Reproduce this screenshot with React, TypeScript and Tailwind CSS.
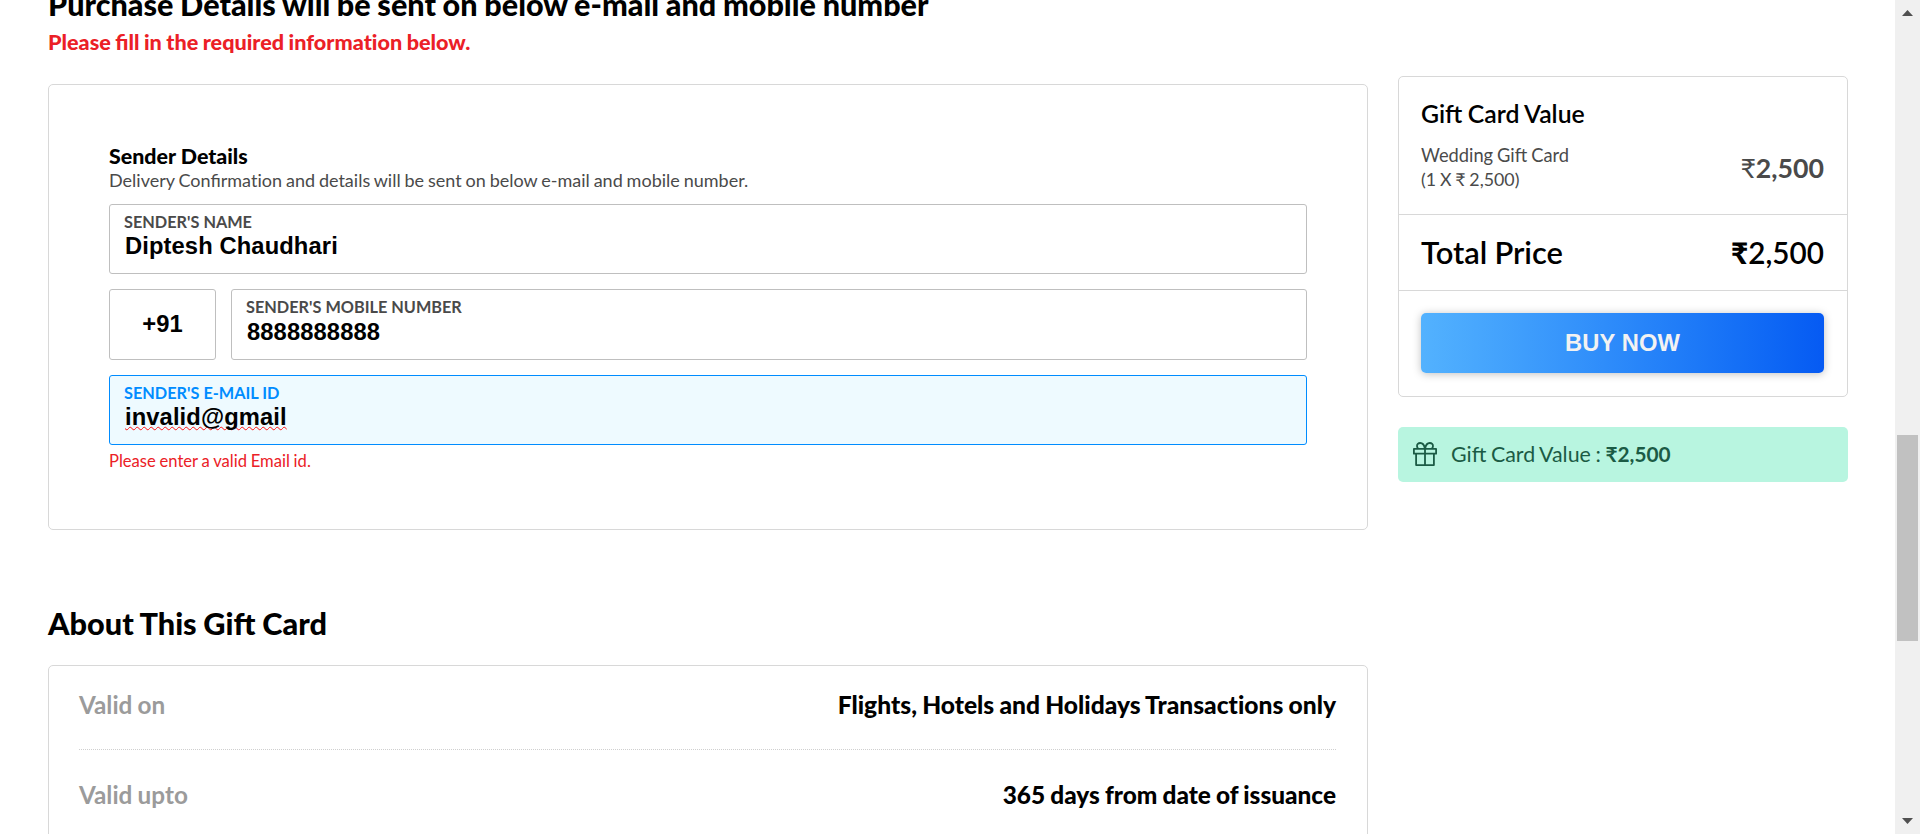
import type { ReactNode } from "react";

function NoLig({ children }: { children: ReactNode }) {
  return <span className="[font-variant-ligatures:none]">{children}</span>;
}

function Field({ label, value, active = false, invalid = false, tall = false }: { label: string; value: string; active?: boolean; invalid?: boolean; tall?: boolean }) {
  return (
    <label className={`flex flex-1 flex-col rounded-[3px] border pt-[7px] pl-[14px] ${tall ? "h-[71px]" : "h-[70px]"} ${active ? "border-[#008cff] bg-[#eefaff]" : "border-[#bfbfbf] bg-white"}`}>
      <span className={`text-[16.3px] leading-5 font-bold ${active ? "text-[#008cff]" : "text-[#4a4a4a]"}`}>{label}</span>
      <span className={`flex pl-px font-['Liberation_Sans',Arial,sans-serif] text-[23.75px] leading-[26px] font-bold tracking-[0.1px] text-black ${tall ? "mt-0.5" : "mt-px"}`}>
        <span className={invalid ? "underline decoration-[#ff1010] decoration-wavy decoration-[1.25px] underline-offset-1 [text-decoration-skip-ink:none]" : ""}>{value}</span>
      </span>
    </label>
  );
}

function GiftIcon() {
  return (
    <svg className="h-6 w-6" viewBox="0 0 24 24" fill="none" stroke="#1b5b45" strokeWidth="1.8" strokeLinejoin="round">
      <rect x="0.9" y="6.9" width="22.2" height="4.8" />
      <path d="M3.1 11.7v11.4h17.8V11.7M12 6.9v16.2" />
      <path d="M11.9 6.6C11.3 3.2 9.6 1 7.2 1 5.2 1 3.9 2.5 4 4.1c.1 1 .5 1.9 1.2 2.6M12.1 6.6C12.7 3.2 14.4 1 16.8 1c2 0 3.3 1.5 3.2 3.1-.1 1-.5 1.9-1.2 2.6" />
    </svg>
  );
}

function Row({ name, children }: { name: string; children: ReactNode }) {
  return (
    <div className="flex h-[90px] items-center justify-between border-b border-dotted border-[#cfcfcf] leading-[30px]">
      <span className="text-[24.3px] font-bold text-[#9b9b9b]">{name}</span>
      {children}
    </div>
  );
}

export default function App() {
  return (
    <div className="flex h-[834px] w-[1920px] justify-between overflow-hidden bg-white font-['Lato',sans-serif] text-black">
      <div className="flex gap-[30px] pl-12">
        <main className="w-[1320px]">
          <h1 className="-mt-[13px] text-[30.6px] leading-9 font-black [word-spacing:-0.02em]">Purchase Details will be sent on below e-mail and mobile number</h1>
          <p className="mt-[6px] text-[21.6px] leading-[26px] font-black [word-spacing:-0.03em] text-[#eb2026]">
            Please fill in the required informa<NoLig>ti</NoLig>on below.
          </p>
          <section className="mt-[29px] h-[446px] rounded-[5px] border border-[#d8d8d8] px-[60px] pt-[58px]">
            <h2 className="text-[21.4px] leading-[26px] font-black">Sender Details</h2>
            <p className="text-[18px] leading-[22px] [word-spacing:-0.04em] text-[#4a4a4a]">
              Delivery Confirma<NoLig>ti</NoLig>on and details will be sent on below e-mail and mobile number.
            </p>
            <div className="mt-[13px] flex">
              <Field label="SENDER'S NAME" value="Diptesh Chaudhari" />
            </div>
            <div className="mt-[15px] flex gap-[15px]">
              <div className="flex h-[71px] w-[107px] items-center justify-center rounded-[3px] border border-[#bfbfbf] pb-0.5 font-['Liberation_Sans',Arial,sans-serif] text-[23.75px] font-bold">+91</div>
              <Field label="SENDER'S MOBILE NUMBER" value="8888888888" tall />
            </div>
            <div className="mt-[15px] flex">
              <Field label="SENDER'S E-MAIL ID" value="invalid@gmail" active invalid />
            </div>
            <p className="mt-[6px] text-[16.6px] leading-5 [word-spacing:-0.03em] text-[#eb2026]">Please enter a valid Email id.</p>
          </section>
          <h2 className="mt-[76px] text-[30.7px] leading-9 font-black [word-spacing:-0.02em]">About This Gift Card</h2>
          <section className="mt-[23px] rounded-t-[5px] border border-[#d8d8d8] pr-[31px] pl-[30px]">
            <div className="-mt-[6px] [word-spacing:-0.04em]">
              <Row name="Valid on">
                <span className="text-[24.6px] font-black [font-variant-ligatures:none]">Flights, Hotels and Holidays Transactions only</span>
              </Row>
              <Row name="Valid upto">
                <span className="text-[24.4px] font-black">365 days from date of issuance</span>
              </Row>
            </div>
          </section>
        </main>

        <aside className="w-[450px] pt-[76px]">
          <section className="rounded-[5px] border border-[#d8d8d8]">
            <div className="h-[138px] border-b border-[#d8d8d8] pt-[22px] pr-[23px] pl-[22px]">
              <h3 className="text-[24.8px] leading-[30px] font-semibold [word-spacing:-0.03em]">Gift Card Value</h3>
              <div className="mt-[14px] flex items-center justify-between text-[#4a4a4a]">
                <p className="text-[18.3px] leading-6 [word-spacing:-0.04em]">
                  Wedding Gift Card
                  <br />
                  <span className="text-[17.8px]">(1 X ₹ 2,500)</span>
                </p>
                <p className="pt-px text-[26.7px] leading-8 font-bold">
                  <span className="font-normal">₹</span>2,500
                </p>
              </div>
            </div>
            <div className="flex h-[76px] items-center justify-between border-b border-[#d8d8d8] pr-[23px] pl-[22px]">
              <span className="text-[30.9px] leading-9 font-semibold [word-spacing:-0.02em]">Total Price</span>
              <span className="text-[29.7px] leading-9 font-semibold">
                <span className="font-black">₹</span>2,500
              </span>
            </div>
            <div className="pt-[22px] pr-[23px] pb-[23px] pl-[22px]">
              <button className="h-[60px] w-full rounded-[5px] bg-linear-to-r from-[#53b2fe] to-[#065af3] font-['Liberation_Sans',Arial,sans-serif] text-[23.75px] font-bold tracking-[0.1px] text-[#f2f2f2] shadow-[0_1px_9px_0_rgba(0,0,0,0.25)]">
                BUY NOW
              </button>
            </div>
          </section>
          <div className="mt-[30px] flex h-[55px] items-center rounded-[5px] bg-[#b8f5e0] pb-px pl-[15px] text-[21.4px] text-[#1b5b45]">
            <GiftIcon />
            <span className="ml-[14px] [word-spacing:-0.04em]">
              Gift Card Value : <b className="text-[20.8px] font-bold">₹2,500</b>
            </span>
          </div>
        </aside>
      </div>

      <div className="flex w-[25px] flex-col items-center justify-between bg-[#f0f0f0] pt-[10px] pb-[10px]">
        <svg className="h-[6px] w-[11px]" viewBox="0 0 11 6" fill="#505050"><path d="M0 6 5.5 0 11 6z" /></svg>
        <div className="mt-[419px] mb-auto h-[206px] w-[21px] bg-[#c1c1c1]" />
        <svg className="h-[6px] w-[11px]" viewBox="0 0 11 6" fill="#505050"><path d="M0 0h11L5.5 6z" /></svg>
      </div>
    </div>
  );
}
